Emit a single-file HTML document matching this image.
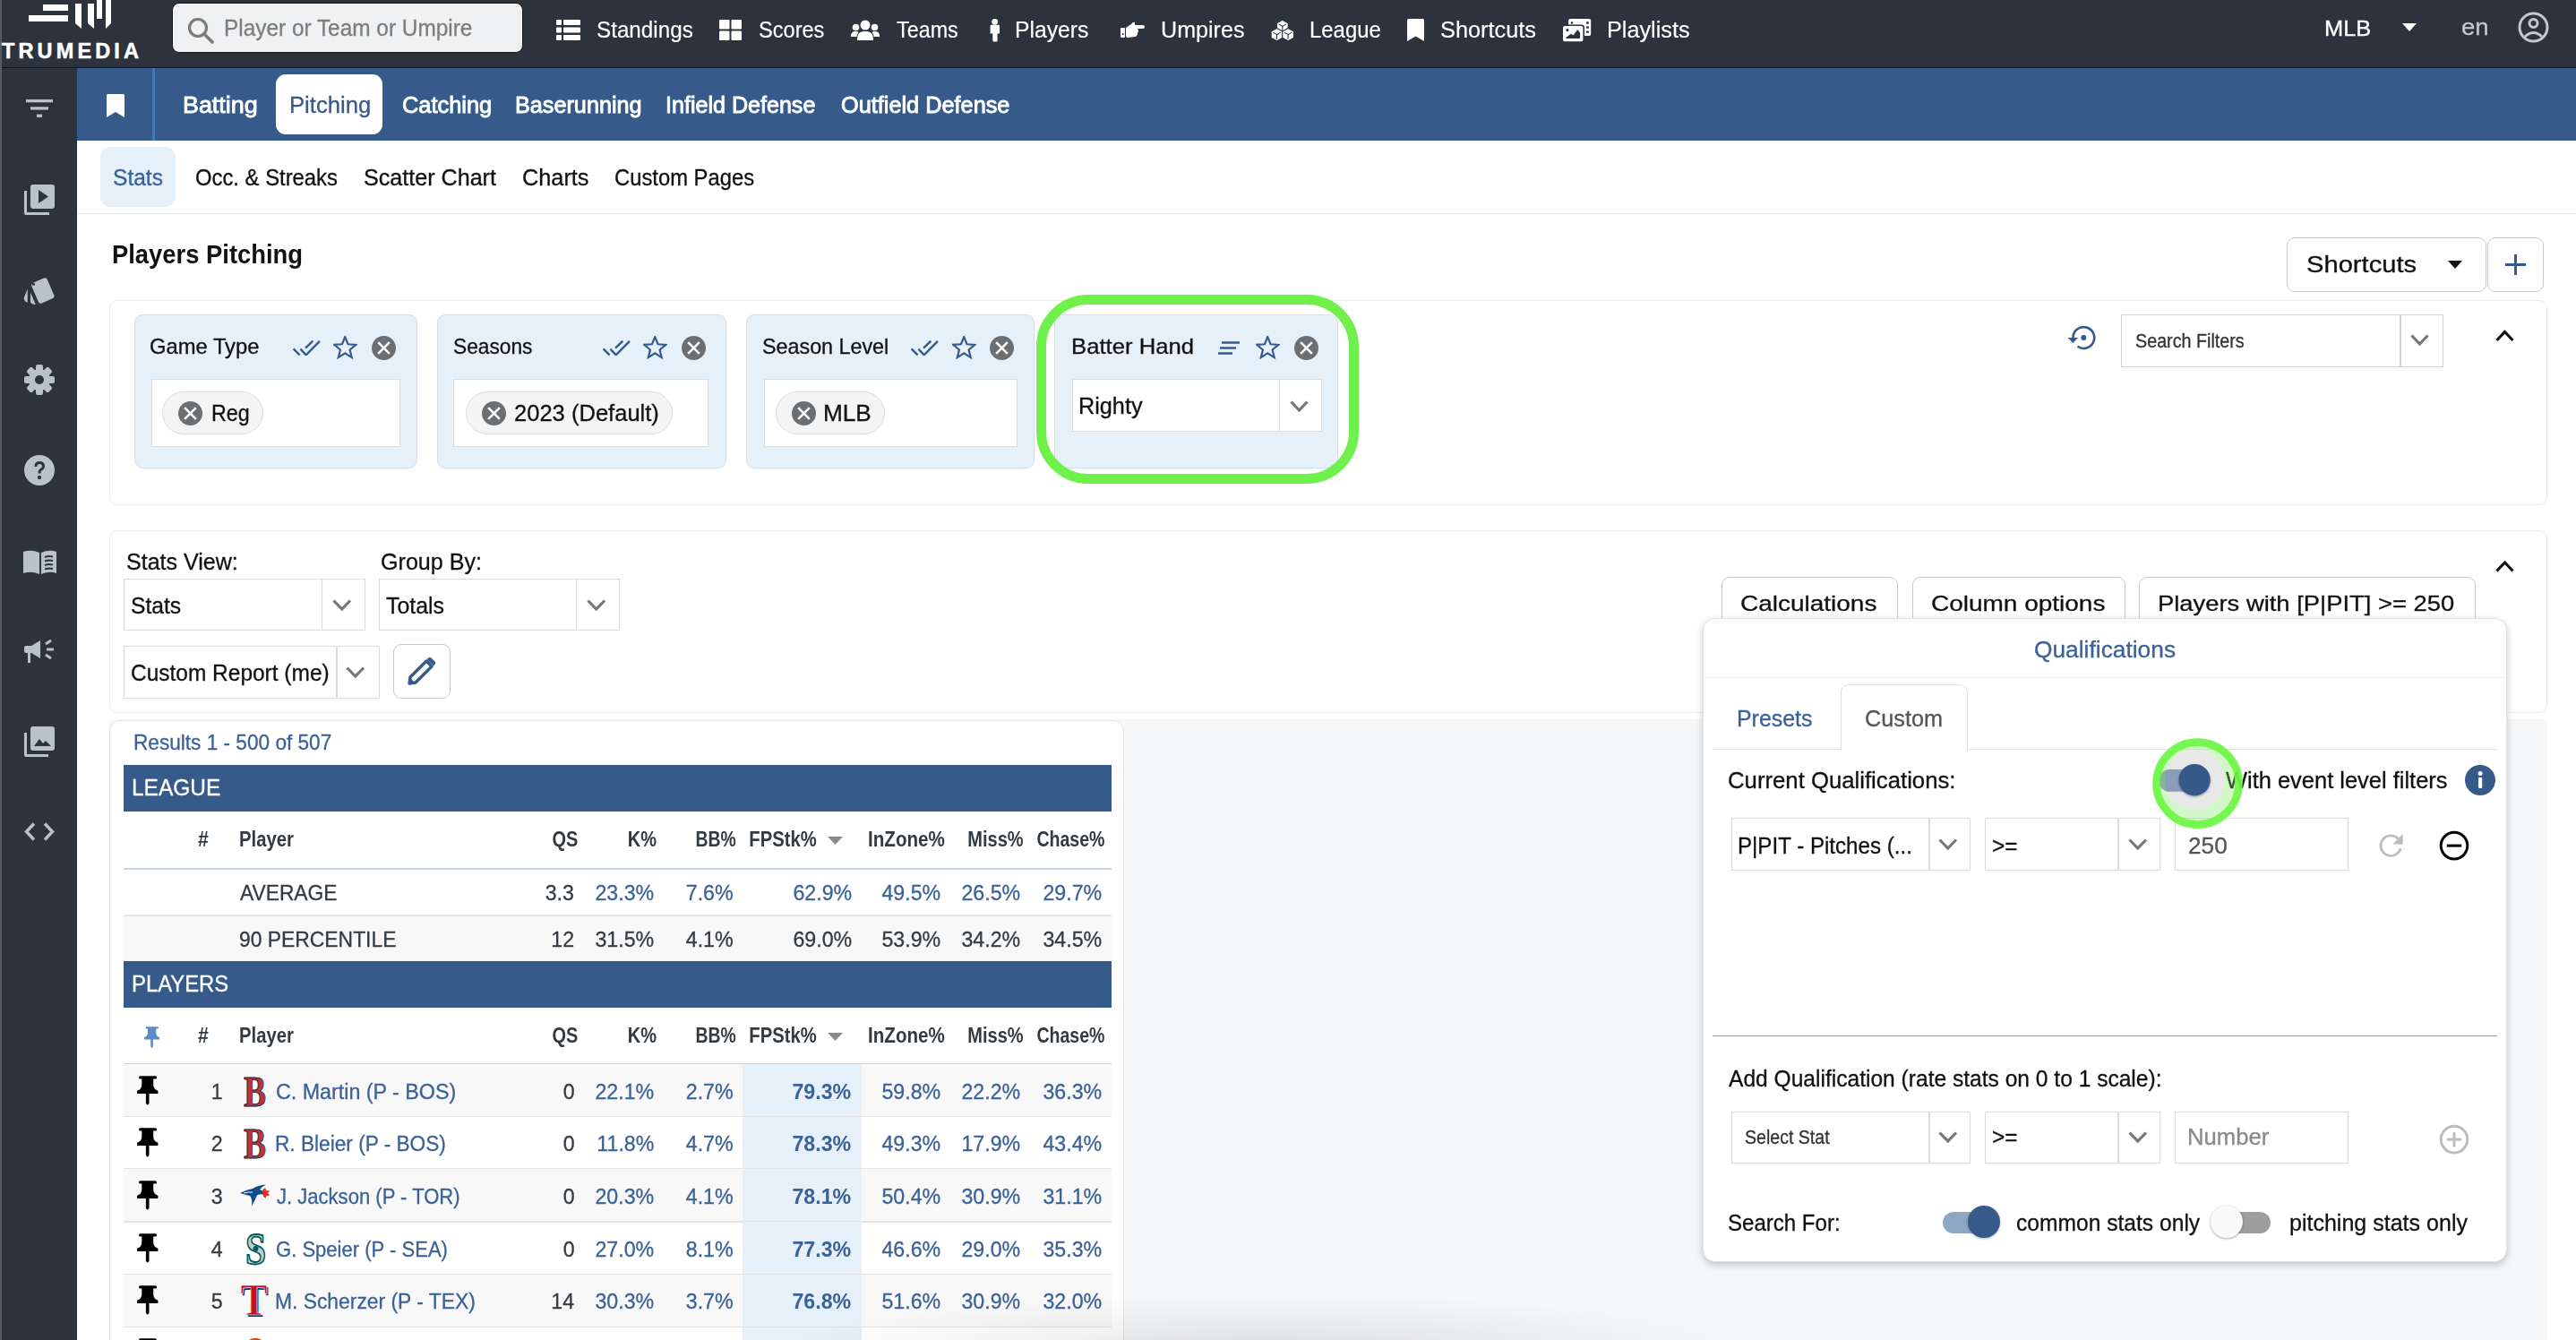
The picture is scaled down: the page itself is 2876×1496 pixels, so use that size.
<!DOCTYPE html>
<html><head><meta charset="utf-8"><title>TruMedia</title>
<style>
html,body{margin:0;padding:0;}
body{width:2876px;height:1496px;overflow:hidden;position:relative;background:#fff;font-family:'Liberation Sans', sans-serif;}
</style></head><body>
<div style="position:absolute;left:0px;top:0px;width:2876px;height:75px;background:#2d333d;"></div>
<div style="position:absolute;left:0px;top:75px;width:2876px;height:1px;background:#101215;"></div>
<div style="position:absolute;left:0px;top:76px;width:86px;height:1420px;background:#2d333d;"></div>
<div style="position:absolute;left:0px;top:0px;width:2px;height:1496px;background:#555b63;"></div>
<svg style="position:absolute;left:30px;top:0px;" width="96" height="34" viewBox="0 0 96 34">
<rect x="18" y="5" width="28" height="7" fill="#fff"/>
<rect x="2" y="17" width="44" height="7" fill="#fff"/>
<polygon points="54,4 61,4 61,32 54,26" fill="#fff"/>
<polygon points="68,4 75,4 75,32 68,26" fill="#fff"/>
<rect x="78" y="0" width="6" height="21" fill="#fff"/>
<polygon points="88,0 94,0 94,26 88,32" fill="#fff"/>
</svg>
<span style="position:absolute;white-space:nowrap;font-family:'Liberation Sans', sans-serif;font-size:23.5px;line-height:26.25px;color:#fff;font-weight:700;-webkit-text-stroke:0.5px #fff;letter-spacing:4.136px;left:2.0px;top:43.73px;transform-origin:0 0;">TRUMEDIA</span>
<div style="position:absolute;left:192px;top:3px;width:392px;height:56px;background:#f0f1f3;border:1px solid #15181c;border-radius:8px;box-sizing:border-box;"></div>
<svg style="position:absolute;left:209px;top:19px;" width="30" height="30" viewBox="0 0 30 30"><circle cx="12" cy="12" r="9.5" fill="none" stroke="#7a7a7a" stroke-width="3.2"/><line x1="19" y1="19" x2="28" y2="28" stroke="#7a7a7a" stroke-width="3.6" stroke-linecap="round"/></svg>
<span style="position:absolute;white-space:nowrap;font-family:'Liberation Sans', sans-serif;font-size:25px;line-height:27.925px;color:#7d7d7d;font-weight:400;-webkit-text-stroke:0.3px #7d7d7d;left:249.55px;top:17.98px;transform-origin:0 0;transform:scaleX(0.9755);">Player or Team or Umpire</span>
<span style="position:absolute;white-space:nowrap;font-family:'Liberation Sans', sans-serif;font-size:25px;line-height:27.925px;color:#fff;font-weight:400;-webkit-text-stroke:0.15px #fff;left:665.73px;top:20.38px;transform-origin:0 0;transform:scaleX(0.9691);">Standings</span>
<span style="position:absolute;white-space:nowrap;font-family:'Liberation Sans', sans-serif;font-size:25px;line-height:27.925px;color:#fff;font-weight:400;-webkit-text-stroke:0.15px #fff;left:847.06px;top:20.38px;transform-origin:0 0;transform:scaleX(0.9435);">Scores</span>
<span style="position:absolute;white-space:nowrap;font-family:'Liberation Sans', sans-serif;font-size:25px;line-height:27.925px;color:#fff;font-weight:400;-webkit-text-stroke:0.15px #fff;left:1000.7px;top:20.38px;transform-origin:0 0;transform:scaleX(0.9339);">Teams</span>
<span style="position:absolute;white-space:nowrap;font-family:'Liberation Sans', sans-serif;font-size:25px;line-height:27.925px;color:#fff;font-weight:400;-webkit-text-stroke:0.15px #fff;left:1133.02px;top:20.38px;transform-origin:0 0;transform:scaleX(0.9893);">Players</span>
<span style="position:absolute;white-space:nowrap;font-family:'Liberation Sans', sans-serif;font-size:25px;line-height:27.925px;color:#fff;font-weight:400;-webkit-text-stroke:0.15px #fff;left:1296.0px;top:20.38px;transform-origin:0 0;transform:scaleX(1.0047);">Umpires</span>
<span style="position:absolute;white-space:nowrap;font-family:'Liberation Sans', sans-serif;font-size:25px;line-height:27.925px;color:#fff;font-weight:400;-webkit-text-stroke:0.15px #fff;left:1462.09px;top:20.38px;transform-origin:0 0;transform:scaleX(0.9563);">League</span>
<span style="position:absolute;white-space:nowrap;font-family:'Liberation Sans', sans-serif;font-size:25px;line-height:27.925px;color:#fff;font-weight:400;-webkit-text-stroke:0.15px #fff;left:1608.49px;top:20.38px;transform-origin:0 0;transform:scaleX(1.0134);">Shortcuts</span>
<span style="position:absolute;white-space:nowrap;font-family:'Liberation Sans', sans-serif;font-size:25px;line-height:27.925px;color:#fff;font-weight:400;-webkit-text-stroke:0.15px #fff;left:1793.98px;top:20.38px;transform-origin:0 0;transform:scaleX(1.0091);">Playlists</span>
<svg style="position:absolute;left:621px;top:22px;" width="27" height="23" viewBox="0 0 27 23"><rect x="0" y="0" width="6" height="6" rx="1" fill="#fff"/><rect x="8" y="0" width="19" height="6" rx="1" fill="#fff"/>
<rect x="0" y="8.5" width="6" height="6" rx="1" fill="#fff"/><rect x="8" y="8.5" width="19" height="6" rx="1" fill="#fff"/>
<rect x="0" y="17" width="6" height="6" rx="1" fill="#fff"/><rect x="8" y="17" width="19" height="6" rx="1" fill="#fff"/></svg>
<svg style="position:absolute;left:803px;top:22px;" width="25" height="23" viewBox="0 0 25 23"><rect x="0" y="0" width="11.5" height="10.5" rx="1" fill="#fff"/><rect x="13.5" y="0" width="11.5" height="10.5" rx="1" fill="#fff"/>
<rect x="0" y="12.5" width="11.5" height="10.5" rx="1" fill="#fff"/><rect x="13.5" y="12.5" width="11.5" height="10.5" rx="1" fill="#fff"/></svg>
<svg style="position:absolute;left:950px;top:22px;" width="32" height="24" viewBox="0 0 32 24"><circle cx="16" cy="6" r="5.5" fill="#fff"/><path d="M7 23 C7 15 10 13 16 13 C22 13 25 15 25 23 Z" fill="#fff"/>
<circle cx="5.5" cy="8.5" r="3.8" fill="#fff"/><path d="M0 19 C0 14 2 13 6 13 C8 13 9 14 8 15 C7 16 6.5 18 6.5 19 Z" fill="#fff"/>
<circle cx="26.5" cy="8.5" r="3.8" fill="#fff"/><path d="M32 19 C32 14 30 13 26 13 C24 13 23 14 24 15 C25 16 25.5 18 25.5 19 Z" fill="#fff"/></svg>
<svg style="position:absolute;left:1104px;top:20px;" width="14" height="28" viewBox="0 0 14 28"><circle cx="6.7" cy="4.3" r="3.4" fill="#fff"/><path d="M3 7.8 H10.6 Q12 7.8 12 9.2 V17.5 H9.6 V25.3 Q9.6 26.4 8.5 26.4 H5.3 Q4.3 26.4 4.3 25.3 V17.5 H1.6 V9.2 Q1.6 7.8 3 7.8Z" fill="#fff"/></svg>
<svg style="position:absolute;left:1251px;top:24px;" width="27" height="19" viewBox="0 0 27 19"><rect x="0" y="7" width="5" height="11" rx="1" fill="#fff"/><path d="M6 7 L12 3 Q14 0 16 1 L16 4 L25 4 Q27 4 27 6 Q27 8 25 8 L19 8 Q20 9 20 10.5 Q20 12 19 12.5 Q19.5 14 18.5 15 Q18 17 16 17 L8 18 Q6 18 6 16 Z" fill="#fff"/><rect x="2" y="13" width="1.5" height="2" fill="#2d333d"/></svg>
<svg style="position:absolute;left:1418px;top:21px;" width="28" height="26" viewBox="0 0 28 26"><polygon points="13.8,1.2000000000000002 20.200000000000003,4.800000000000001 20.200000000000003,12.0 13.8,15.600000000000001 7.4,12.0 7.4,4.800000000000001" fill="#fff" stroke="#2d333d" stroke-width="1.1" stroke-linejoin="round"/><path d="M9.600000000000001 5.9 L13.8 8.4 L18.000000000000004 5.9 M13.8 8.4 V13.600000000000001" fill="none" stroke="#2d333d" stroke-width="1.1"/><polygon points="9.200000000000001,7.4 12.600000000000001,9.6 12.600000000000001,13.000000000000002 9.200000000000001,11.4" fill="#2d333d" opacity="0.0"/><polygon points="7.5,10.400000000000002 13.9,14.000000000000002 13.9,21.200000000000003 7.5,24.8 1.0999999999999996,21.200000000000003 1.0999999999999996,14.000000000000002" fill="#fff" stroke="#2d333d" stroke-width="1.1" stroke-linejoin="round"/><path d="M3.3 15.100000000000001 L7.5 17.6 L11.7 15.100000000000001 M7.5 17.6 V22.8" fill="none" stroke="#2d333d" stroke-width="1.1"/><polygon points="2.8999999999999995,16.6 6.3,18.8 6.3,22.2 2.8999999999999995,20.6" fill="#2d333d" opacity="0.0"/><polygon points="20.1,10.400000000000002 26.5,14.000000000000002 26.5,21.200000000000003 20.1,24.8 13.700000000000001,21.200000000000003 13.700000000000001,14.000000000000002" fill="#fff" stroke="#2d333d" stroke-width="1.1" stroke-linejoin="round"/><path d="M15.900000000000002 15.100000000000001 L20.1 17.6 L24.3 15.100000000000001 M20.1 17.6 V22.8" fill="none" stroke="#2d333d" stroke-width="1.1"/><polygon points="15.500000000000002,16.6 18.900000000000002,18.8 18.900000000000002,22.2 15.500000000000002,20.6" fill="#2d333d" opacity="0.0"/></svg>
<svg style="position:absolute;left:1571px;top:21px;" width="19" height="25" viewBox="0 0 19 25"><path d="M1.5 0 H17.5 Q19 0 19 1.5 V25 L9.5 19.5 L0 25 V1.5 Q0 0 1.5 0Z" fill="#fff"/></svg>
<svg style="position:absolute;left:1744px;top:20px;" width="34" height="28" viewBox="0 0 34 28"><rect x="7.1" y="1" width="25.1" height="19.1" rx="2" fill="#fff"/>
<rect x="27.1" y="4.3" width="2.8" height="2.3" fill="#2d333d"/><rect x="27.1" y="9.4" width="2.8" height="2.3" fill="#2d333d"/><rect x="27.1" y="14.5" width="2.8" height="2.3" fill="#2d333d"/><rect x="9.9" y="4.3" width="2.3" height="2.3" fill="#2d333d"/>
<rect x="0.2" y="8.2" width="24" height="18.8" rx="2.6" fill="#fff" stroke="#2d333d" stroke-width="1.6"/>
<path d="M4.3 22.9 V22 L9.9 17.8 L12.6 19.2 L17.3 13.1 L20.1 16.4 V22.9 Z" fill="#2d333d"/><circle cx="5.9" cy="13.6" r="1.6" fill="#2d333d"/></svg>
<span style="position:absolute;white-space:nowrap;font-family:'Liberation Sans', sans-serif;font-size:24.2px;line-height:27.031px;color:#fff;font-weight:400;-webkit-text-stroke:0.3px #fff;left:2595.45px;top:18.1px;transform-origin:0 0;transform:scaleX(1.0504);">MLB</span>
<svg style="position:absolute;left:2682px;top:26px;" width="16" height="9" viewBox="0 0 16 9"><polygon points="0,0 16,0 8,9" fill="#fff"/></svg>
<span style="position:absolute;white-space:nowrap;font-family:'Liberation Sans', sans-serif;font-size:25px;line-height:27.925px;color:#c3c8ce;font-weight:400;-webkit-text-stroke:0.3px #c3c8ce;left:2747.9px;top:17.38px;transform-origin:0 0;transform:scaleX(1.1002);">en</span>
<svg style="position:absolute;left:2811px;top:13px;" width="35" height="35" viewBox="0 0 35 35"><circle cx="17.5" cy="17.5" r="15.5" fill="none" stroke="#c3c8ce" stroke-width="3"/>
<circle cx="17.5" cy="13" r="4.5" fill="none" stroke="#c3c8ce" stroke-width="3"/>
<path d="M8 28 Q17.5 19 27 28" fill="none" stroke="#c3c8ce" stroke-width="3"/></svg>
<svg style="position:absolute;left:29px;top:111px;" width="31" height="21" viewBox="0 0 31 21"><rect x="0" y="0" width="30" height="3.3" fill="#b9c1c9"/><rect x="5" y="8.3" width="20" height="3.3" fill="#b9c1c9"/><rect x="12" y="16.6" width="6" height="3.3" fill="#b9c1c9"/></svg>
<svg style="position:absolute;left:27px;top:206px;" width="35" height="35" viewBox="0 0 35 35"><path d="M0 7 V32 Q0 34 2 34 H28 V31 H3 V7 Z" fill="#b9c1c9"/><rect x="7" y="0" width="27" height="27" rx="3" fill="#b9c1c9"/><polygon points="16,6 27,13.5 16,21" fill="#2d333d"/></svg>
<svg style="position:absolute;left:20px;top:300px;" width="50" height="50" viewBox="0 0 50 50"><path d="M10.8 22.8 L6.8 32 Q6 35.5 10.8 38 Z" fill="#b9c1c9"/><path d="M14 26.5 V37 Q14.5 39.6 19.8 40.1 Z" fill="#b9c1c9"/><rect x="18.3" y="12.15" width="19" height="24.7" rx="3" transform="rotate(-23.2 27.8 24.5)" fill="#b9c1c9"/><circle cx="17.4" cy="17.2" r="1.6" fill="#2d333d"/></svg>
<svg style="position:absolute;left:27px;top:407px;" width="34" height="34" viewBox="0 0 34 34"><g transform="translate(17 17)"><g fill="#b9c1c9">
<rect x="-4" y="-17" width="8" height="34" rx="2"/><rect x="-4" y="-17" width="8" height="34" rx="2" transform="rotate(45)"/>
<rect x="-4" y="-17" width="8" height="34" rx="2" transform="rotate(90)"/><rect x="-4" y="-17" width="8" height="34" rx="2" transform="rotate(135)"/>
<circle r="12"/></g><circle r="5" fill="#2d333d"/></g></svg>
<svg style="position:absolute;left:27px;top:508px;" width="34" height="34" viewBox="0 0 34 34"><circle cx="17" cy="17" r="17" fill="#b9c1c9"/><path d="M11.5 13 Q11.5 7 17 7 Q23 7 23 12.5 Q23 15.5 19.5 17.5 Q18.5 18.2 18.5 20.5 H15.5 Q15.5 16.5 18 15.2 Q20 14 20 12.5 Q20 10 17 10 Q14.5 10 14.5 13 Z" fill="#2d333d"/><circle cx="17" cy="25" r="2.2" fill="#2d333d"/></svg>
<svg style="position:absolute;left:26px;top:613px;" width="38" height="29" viewBox="0 0 38 29"><path d="M0 3 Q9 0 18 4 V28 Q9 24 0 27 Z" fill="#b9c1c9"/><path d="M20 4 Q29 0 37 3 V27 Q29 24 20 28 Z" fill="#b9c1c9"/><g stroke="#2d333d" stroke-width="2"><path d="M24 9 Q28 7.5 33 8.5"/><path d="M24 13.5 Q28 12 33 13"/><path d="M24 18 Q28 16.5 33 17.5"/><path d="M24 22.5 Q28 21 33 22"/></g></svg>
<svg style="position:absolute;left:27px;top:714px;" width="34" height="27" viewBox="0 0 34 27"><path d="M2 7 H8 L18 1 V21 L8 15 H7 V26 H4 V15 H2 Q0 15 0 13 V9 Q0 7 2 7Z" fill="#b9c1c9"/><g stroke="#b9c1c9" stroke-width="3"><path d="M24 5 L30 1"/><path d="M25 11 H33"/><path d="M24 17 L30 21"/></g></svg>
<svg style="position:absolute;left:27px;top:811px;" width="35" height="35" viewBox="0 0 35 35"><path d="M0 7 V32 Q0 34 2 34 H27 V31 H3 V7 Z" fill="#b9c1c9"/><rect x="7" y="0" width="27" height="27" rx="3" fill="#b9c1c9"/><path d="M11 22 L17 14 L21 19 L24 16 L30 22 Z" fill="#2d333d"/></svg>
<svg style="position:absolute;left:27px;top:918px;" width="34" height="21" viewBox="0 0 34 21"><path d="M11 1.5 L2.5 10.5 L11 19.5" fill="none" stroke="#b9c1c9" stroke-width="3.4"/><path d="M23 1.5 L31.5 10.5 L23 19.5" fill="none" stroke="#b9c1c9" stroke-width="3.4"/></svg>
<div style="position:absolute;left:86px;top:76px;width:2790px;height:81px;background:#365a8a;"></div>
<div style="position:absolute;left:170px;top:76px;width:3px;height:81px;background:#4677b8;"></div>
<svg style="position:absolute;left:119px;top:105px;" width="20" height="26" viewBox="0 0 20 26"><path d="M1.5 0 H18.5 Q20 0 20 1.5 V26 L10 20 L0 26 V1.5 Q0 0 1.5 0Z" fill="#fff"/></svg>
<div style="position:absolute;left:308px;top:83px;width:119px;height:67px;background:#fff;border-radius:11px;"></div>
<span style="position:absolute;white-space:nowrap;font-family:'Liberation Sans', sans-serif;font-size:26px;line-height:29.042px;color:#fff;font-weight:400;-webkit-text-stroke:0.9px #fff;left:204.43px;top:103.47px;transform-origin:0 0;transform:scaleX(1.0337);">Batting</span>
<span style="position:absolute;white-space:nowrap;font-family:'Liberation Sans', sans-serif;font-size:26px;line-height:29.042px;color:#365a8a;font-weight:400;-webkit-text-stroke:0.3px #365a8a;left:322.73px;top:103.47px;transform-origin:0 0;transform:scaleX(0.9861);">Pitching</span>
<span style="position:absolute;white-space:nowrap;font-family:'Liberation Sans', sans-serif;font-size:26px;line-height:29.042px;color:#fff;font-weight:400;-webkit-text-stroke:0.9px #fff;left:448.62px;top:103.47px;transform-origin:0 0;transform:scaleX(0.9765);">Catching</span>
<span style="position:absolute;white-space:nowrap;font-family:'Liberation Sans', sans-serif;font-size:26px;line-height:29.042px;color:#fff;font-weight:400;-webkit-text-stroke:0.9px #fff;left:574.86px;top:103.47px;transform-origin:0 0;transform:scaleX(0.9696);">Baserunning</span>
<span style="position:absolute;white-space:nowrap;font-family:'Liberation Sans', sans-serif;font-size:26px;line-height:29.042px;color:#fff;font-weight:400;-webkit-text-stroke:0.9px #fff;left:743.07px;top:103.47px;transform-origin:0 0;transform:scaleX(0.9650);">Infield Defense</span>
<span style="position:absolute;white-space:nowrap;font-family:'Liberation Sans', sans-serif;font-size:26px;line-height:29.042px;color:#fff;font-weight:400;-webkit-text-stroke:0.9px #fff;left:939.03px;top:103.47px;transform-origin:0 0;transform:scaleX(0.9729);">Outfield Defense</span>
<div style="position:absolute;left:112px;top:164px;width:84px;height:67px;background:#e6f0f9;border-radius:11px;"></div>
<span style="position:absolute;white-space:nowrap;font-family:'Liberation Sans', sans-serif;font-size:25px;line-height:27.925px;color:#3a6198;font-weight:400;-webkit-text-stroke:0.3px #3a6198;left:125.52px;top:185.38px;transform-origin:0 0;transform:scaleX(0.9825);">Stats</span>
<span style="position:absolute;white-space:nowrap;font-family:'Liberation Sans', sans-serif;font-size:25px;line-height:27.925px;color:#111;font-weight:400;-webkit-text-stroke:0.3px #111;left:217.55px;top:185.38px;transform-origin:0 0;transform:scaleX(0.9533);">Occ. &amp; Streaks</span>
<span style="position:absolute;white-space:nowrap;font-family:'Liberation Sans', sans-serif;font-size:25px;line-height:27.925px;color:#111;font-weight:400;-webkit-text-stroke:0.3px #111;left:405.5px;top:185.38px;transform-origin:0 0;transform:scaleX(1.0046);">Scatter Chart</span>
<span style="position:absolute;white-space:nowrap;font-family:'Liberation Sans', sans-serif;font-size:25px;line-height:27.925px;color:#111;font-weight:400;-webkit-text-stroke:0.3px #111;left:582.99px;top:185.38px;transform-origin:0 0;transform:scaleX(1.0120);">Charts</span>
<span style="position:absolute;white-space:nowrap;font-family:'Liberation Sans', sans-serif;font-size:25px;line-height:27.925px;color:#111;font-weight:400;-webkit-text-stroke:0.3px #111;left:686.05px;top:185.38px;transform-origin:0 0;transform:scaleX(0.9516);">Custom Pages</span>
<div style="position:absolute;left:86px;top:237.5px;width:2790px;height:1.5px;background:#e4e4e4;"></div>
<span style="position:absolute;white-space:nowrap;font-family:'Liberation Sans', sans-serif;font-size:30px;line-height:33.51px;color:#111;font-weight:700;left:125.17px;top:266.85px;transform-origin:0 0;transform:scaleX(0.9127);">Players Pitching</span>
<div style="position:absolute;left:2553px;top:265px;width:223px;height:61px;border:1.5px solid #c9c9c9;border-radius:9px;box-sizing:border-box;background:#fff;"></div>
<div style="position:absolute;left:2777px;top:265px;width:63px;height:61px;border:1.5px solid #c9c9c9;border-radius:9px;box-sizing:border-box;background:#fff;"></div>
<span style="position:absolute;white-space:nowrap;font-family:'Liberation Sans', sans-serif;font-size:26px;line-height:29.042px;color:#111;font-weight:400;-webkit-text-stroke:0.3px #111;left:2574.88px;top:280.87px;transform-origin:0 0;transform:scaleX(1.1210);">Shortcuts</span>
<svg style="position:absolute;left:2733px;top:291px;" width="16" height="9" viewBox="0 0 16 9"><polygon points="0,0 16,0 8,9" fill="#111"/></svg>
<svg style="position:absolute;left:2797px;top:284px;" width="23" height="23" viewBox="0 0 23 23"><rect x="10" y="0" width="3" height="23" fill="#365a8a"/><rect x="0" y="10" width="23" height="3" fill="#365a8a"/></svg>
<div style="position:absolute;left:122px;top:335px;width:2722px;height:229px;border:1.5px solid #ebebeb;border-radius:9px;box-sizing:border-box;"></div>
<div style="position:absolute;left:149.5px;top:350.5px;width:316.0px;height:172px;background:#e6f0f9;border:1.5px solid #d5dfea;border-radius:9px;box-sizing:border-box;"></div>
<span style="position:absolute;white-space:nowrap;font-family:'Liberation Sans', sans-serif;font-size:24px;line-height:26.808px;color:#111;font-weight:400;-webkit-text-stroke:0.3px #111;left:167.01px;top:374.28px;transform-origin:0 0;transform:scaleX(0.9902);">Game Type</span>
<svg style="position:absolute;left:327px;top:379.5px;" width="31" height="17" viewBox="0 0 31 17"><path d="M0.6 9.4 L7.6 16.4 M8.4 9.7 L14.7 16.3 L29.9 0.9 M14 8.7 L22.3 0.6" fill="none" stroke="#365a8a" stroke-width="2.4"/></svg>
<svg style="position:absolute;left:372.0px;top:374.8px;" width="27" height="26" viewBox="0 0 27 26"><polygon points="13.25,1.10 16.54,9.27 25.33,9.88 18.58,15.53 20.71,24.07 13.25,19.40 5.79,24.07 7.92,15.53 1.17,9.88 9.96,9.27" fill="none" stroke="#365a8a" stroke-width="2.2" stroke-linejoin="miter" stroke-miterlimit="10"/></svg>
<svg style="position:absolute;left:415px;top:374.5px;" width="27" height="27" viewBox="0 0 27 27"><circle cx="13.5" cy="13.5" r="13.5" fill="#6b6f72"/><path d="M7.155 7.155 L19.845 19.845 M19.845 7.155 L7.155 19.845" stroke="#fff" stroke-width="2.565"/></svg>
<div style="position:absolute;left:168.5px;top:423px;width:278.0px;height:75.5px;background:#fff;border:1.5px solid #dcdcdc;box-sizing:border-box;"></div>
<div style="position:absolute;left:181px;top:437px;width:113px;height:47.5px;background:#f4f4f4;border:1.5px solid #dcdcdc;border-radius:24px;box-sizing:border-box;"></div>
<svg style="position:absolute;left:199px;top:447.5px;" width="27" height="27" viewBox="0 0 27 27"><circle cx="13.5" cy="13.5" r="13.5" fill="#6b6f72"/><path d="M7.155 7.155 L19.845 19.845 M19.845 7.155 L7.155 19.845" stroke="#fff" stroke-width="2.565"/></svg>
<span style="position:absolute;white-space:nowrap;font-family:'Liberation Sans', sans-serif;font-size:25px;line-height:27.925px;color:#111;font-weight:400;-webkit-text-stroke:0.3px #111;left:235.64px;top:448.12px;transform-origin:0 0;transform:scaleX(0.9311);">Reg</span>
<div style="position:absolute;left:487.5px;top:350.5px;width:323.0px;height:172px;background:#e6f0f9;border:1.5px solid #d5dfea;border-radius:9px;box-sizing:border-box;"></div>
<span style="position:absolute;white-space:nowrap;font-family:'Liberation Sans', sans-serif;font-size:24px;line-height:26.808px;color:#111;font-weight:400;-webkit-text-stroke:0.3px #111;left:506.05px;top:374.28px;transform-origin:0 0;transform:scaleX(0.9470);">Seasons</span>
<svg style="position:absolute;left:673px;top:379.5px;" width="31" height="17" viewBox="0 0 31 17"><path d="M0.6 9.4 L7.6 16.4 M8.4 9.7 L14.7 16.3 L29.9 0.9 M14 8.7 L22.3 0.6" fill="none" stroke="#365a8a" stroke-width="2.4"/></svg>
<svg style="position:absolute;left:717.5px;top:374.8px;" width="27" height="26" viewBox="0 0 27 26"><polygon points="13.25,1.10 16.54,9.27 25.33,9.88 18.58,15.53 20.71,24.07 13.25,19.40 5.79,24.07 7.92,15.53 1.17,9.88 9.96,9.27" fill="none" stroke="#365a8a" stroke-width="2.2" stroke-linejoin="miter" stroke-miterlimit="10"/></svg>
<svg style="position:absolute;left:761px;top:374.5px;" width="27" height="27" viewBox="0 0 27 27"><circle cx="13.5" cy="13.5" r="13.5" fill="#6b6f72"/><path d="M7.155 7.155 L19.845 19.845 M19.845 7.155 L7.155 19.845" stroke="#fff" stroke-width="2.565"/></svg>
<div style="position:absolute;left:506px;top:423px;width:285px;height:75.5px;background:#fff;border:1.5px solid #dcdcdc;box-sizing:border-box;"></div>
<div style="position:absolute;left:520px;top:437px;width:231px;height:47.5px;background:#f4f4f4;border:1.5px solid #dcdcdc;border-radius:24px;box-sizing:border-box;"></div>
<svg style="position:absolute;left:538px;top:447.5px;" width="27" height="27" viewBox="0 0 27 27"><circle cx="13.5" cy="13.5" r="13.5" fill="#6b6f72"/><path d="M7.155 7.155 L19.845 19.845 M19.845 7.155 L7.155 19.845" stroke="#fff" stroke-width="2.565"/></svg>
<span style="position:absolute;white-space:nowrap;font-family:'Liberation Sans', sans-serif;font-size:25px;line-height:27.925px;color:#111;font-weight:400;-webkit-text-stroke:0.3px #111;left:574.48px;top:448.12px;transform-origin:0 0;transform:scaleX(1.0218);">2023 (Default)</span>
<div style="position:absolute;left:833.4px;top:350.5px;width:322.0000000000001px;height:172px;background:#e6f0f9;border:1.5px solid #d5dfea;border-radius:9px;box-sizing:border-box;"></div>
<span style="position:absolute;white-space:nowrap;font-family:'Liberation Sans', sans-serif;font-size:24px;line-height:26.808px;color:#111;font-weight:400;-webkit-text-stroke:0.3px #111;left:851.03px;top:374.28px;transform-origin:0 0;transform:scaleX(0.9713);">Season Level</span>
<svg style="position:absolute;left:1017px;top:379.5px;" width="31" height="17" viewBox="0 0 31 17"><path d="M0.6 9.4 L7.6 16.4 M8.4 9.7 L14.7 16.3 L29.9 0.9 M14 8.7 L22.3 0.6" fill="none" stroke="#365a8a" stroke-width="2.4"/></svg>
<svg style="position:absolute;left:1062.5px;top:374.8px;" width="27" height="26" viewBox="0 0 27 26"><polygon points="13.25,1.10 16.54,9.27 25.33,9.88 18.58,15.53 20.71,24.07 13.25,19.40 5.79,24.07 7.92,15.53 1.17,9.88 9.96,9.27" fill="none" stroke="#365a8a" stroke-width="2.2" stroke-linejoin="miter" stroke-miterlimit="10"/></svg>
<svg style="position:absolute;left:1105px;top:374.5px;" width="27" height="27" viewBox="0 0 27 27"><circle cx="13.5" cy="13.5" r="13.5" fill="#6b6f72"/><path d="M7.155 7.155 L19.845 19.845 M19.845 7.155 L7.155 19.845" stroke="#fff" stroke-width="2.565"/></svg>
<div style="position:absolute;left:852.7px;top:423px;width:283.70000000000005px;height:75.5px;background:#fff;border:1.5px solid #dcdcdc;box-sizing:border-box;"></div>
<div style="position:absolute;left:866px;top:437px;width:121.70000000000005px;height:47.5px;background:#f4f4f4;border:1.5px solid #dcdcdc;border-radius:24px;box-sizing:border-box;"></div>
<svg style="position:absolute;left:883.7px;top:447.5px;" width="27" height="27" viewBox="0 0 27 27"><circle cx="13.5" cy="13.5" r="13.5" fill="#6b6f72"/><path d="M7.155 7.155 L19.845 19.845 M19.845 7.155 L7.155 19.845" stroke="#fff" stroke-width="2.565"/></svg>
<span style="position:absolute;white-space:nowrap;font-family:'Liberation Sans', sans-serif;font-size:25px;line-height:27.925px;color:#111;font-weight:400;-webkit-text-stroke:0.3px #111;left:918.91px;top:448.12px;transform-origin:0 0;transform:scaleX(1.0466);">MLB</span>
<div style="position:absolute;left:1177px;top:350.5px;width:317.4000000000001px;height:172px;background:#e6f0f9;border:1.5px solid #d5dfea;border-radius:9px;box-sizing:border-box;"></div>
<span style="position:absolute;white-space:nowrap;font-family:'Liberation Sans', sans-serif;font-size:24px;line-height:26.808px;color:#111;font-weight:400;-webkit-text-stroke:0.3px #111;left:1195.93px;top:374.28px;transform-origin:0 0;transform:scaleX(1.0698);">Batter Hand</span>
<svg style="position:absolute;left:1402.2px;top:374.8px;" width="27" height="26" viewBox="0 0 27 26"><polygon points="13.25,1.10 16.54,9.27 25.33,9.88 18.58,15.53 20.71,24.07 13.25,19.40 5.79,24.07 7.92,15.53 1.17,9.88 9.96,9.27" fill="none" stroke="#365a8a" stroke-width="2.2" stroke-linejoin="miter" stroke-miterlimit="10"/></svg>
<svg style="position:absolute;left:1444.6px;top:374.5px;" width="27" height="27" viewBox="0 0 27 27"><circle cx="13.5" cy="13.5" r="13.5" fill="#6b6f72"/><path d="M7.155 7.155 L19.845 19.845 M19.845 7.155 L7.155 19.845" stroke="#fff" stroke-width="2.565"/></svg>
<svg style="position:absolute;left:1359px;top:381px;" width="26" height="15" viewBox="0 0 26 15"><path d="M5 1.5 H25 M3 7.5 H21 M1 13.5 H17" stroke="#365a8a" stroke-width="2.6"/></svg>
<div style="position:absolute;left:1196.5px;top:423.4px;width:279px;height:58.6px;background:#fff;border:1.5px solid #dcdcdc;box-sizing:border-box;"></div>
<div style="position:absolute;left:1427.5px;top:423.4px;width:1.5px;height:58.6px;background:#dcdcdc;"></div>
<span style="position:absolute;white-space:nowrap;font-family:'Liberation Sans', sans-serif;font-size:25px;line-height:27.925px;color:#111;font-weight:400;-webkit-text-stroke:0.3px #111;left:1203.68px;top:439.88px;transform-origin:0 0;transform:scaleX(1.0092);">Righty</span>
<svg style="position:absolute;left:1439.5px;top:447px;" width="21" height="13" viewBox="0 0 21 13"><path d="M1.5 1.5 L10.5 11 L19.5 1.5" fill="none" stroke="#777" stroke-width="3.2"/></svg>
<div style="position:absolute;left:1156.8px;top:329px;width:360px;height:211px;border:11px solid #6ff04a;border-radius:58px;box-sizing:border-box;"></div>
<svg style="position:absolute;left:2309px;top:363px;" width="32" height="29" viewBox="0 0 32 29"><path d="M5.4 14 A11.9 11.9 0 1 1 10.47 23.75" fill="none" stroke="#365a8a" stroke-width="2.6"/><polygon points="-0.1,14.1 11.1,14.1 5.4,19.9" fill="#365a8a"/><circle cx="17.3" cy="14" r="3" fill="#365a8a"/></svg>
<div style="position:absolute;left:2368px;top:350.5px;width:360px;height:59px;background:#fff;border:1.5px solid #d6d6d6;box-sizing:border-box;"></div>
<div style="position:absolute;left:2679px;top:350.5px;width:1.5px;height:59px;background:#d6d6d6;"></div>
<span style="position:absolute;white-space:nowrap;font-family:'Liberation Sans', sans-serif;font-size:21.5px;line-height:24.015px;color:#333;font-weight:400;-webkit-text-stroke:0.3px #333;left:2384.0px;top:368.54px;transform-origin:0 0;transform:scaleX(0.9176);">Search Filters</span>
<svg style="position:absolute;left:2691px;top:373px;" width="21" height="13" viewBox="0 0 21 13"><path d="M1.5 1.5 L10.5 11 L19.5 1.5" fill="none" stroke="#777" stroke-width="3.2"/></svg>
<svg style="position:absolute;left:2786px;top:368px;" width="21" height="14" viewBox="0 0 21 14"><path d="M1.5 12 L10.5 2.5 L19.5 12" fill="none" stroke="#111" stroke-width="3.2"/></svg>
<div style="position:absolute;left:122px;top:592px;width:2722px;height:204px;border:1.5px solid #ebebeb;border-radius:9px;box-sizing:border-box;"></div>
<span style="position:absolute;white-space:nowrap;font-family:'Liberation Sans', sans-serif;font-size:25.5px;line-height:28.483px;color:#111;font-weight:400;-webkit-text-stroke:0.3px #111;left:141.02px;top:612.92px;transform-origin:0 0;transform:scaleX(0.9818);">Stats View:</span>
<span style="position:absolute;white-space:nowrap;font-family:'Liberation Sans', sans-serif;font-size:25.5px;line-height:28.483px;color:#111;font-weight:400;-webkit-text-stroke:0.3px #111;left:425.02px;top:612.92px;transform-origin:0 0;transform:scaleX(0.9846);">Group By:</span>
<div style="position:absolute;left:138px;top:645.5px;width:269.5px;height:58.5px;background:#fff;border:1.5px solid #dcdcdc;box-sizing:border-box;"></div>
<div style="position:absolute;left:358.5px;top:645.5px;width:1.5px;height:58.5px;background:#dcdcdc;"></div>
<span style="position:absolute;white-space:nowrap;font-family:'Liberation Sans', sans-serif;font-size:25.5px;line-height:28.483px;color:#111;font-weight:400;-webkit-text-stroke:0.3px #111;left:145.78px;top:661.92px;transform-origin:0 0;transform:scaleX(0.9670);">Stats</span>
<svg style="position:absolute;left:371px;top:669px;" width="21.5" height="13" viewBox="0 0 21.5 13"><path d="M1.5 1.5 L10.75 11 L20.0 1.5" fill="none" stroke="#777" stroke-width="3.2"/></svg>
<div style="position:absolute;left:422.5px;top:645.5px;width:269.25px;height:58.5px;background:#fff;border:1.5px solid #dcdcdc;box-sizing:border-box;"></div>
<div style="position:absolute;left:642.5px;top:645.5px;width:1.5px;height:58.5px;background:#dcdcdc;"></div>
<span style="position:absolute;white-space:nowrap;font-family:'Liberation Sans', sans-serif;font-size:25.5px;line-height:28.483px;color:#111;font-weight:400;-webkit-text-stroke:0.3px #111;left:430.75px;top:661.92px;transform-origin:0 0;transform:scaleX(0.9755);">Totals</span>
<svg style="position:absolute;left:655px;top:669px;" width="21.5" height="13" viewBox="0 0 21.5 13"><path d="M1.5 1.5 L10.75 11 L20.0 1.5" fill="none" stroke="#777" stroke-width="3.2"/></svg>
<div style="position:absolute;left:138px;top:721px;width:285.75px;height:58.5px;background:#fff;border:1.5px solid #dcdcdc;box-sizing:border-box;"></div>
<div style="position:absolute;left:375px;top:721px;width:1.5px;height:58.5px;background:#dcdcdc;"></div>
<span style="position:absolute;white-space:nowrap;font-family:'Liberation Sans', sans-serif;font-size:25.5px;line-height:28.483px;color:#111;font-weight:400;-webkit-text-stroke:0.3px #111;left:145.79px;top:736.92px;transform-origin:0 0;transform:scaleX(0.9596);">Custom Report (me)</span>
<svg style="position:absolute;left:386px;top:744px;" width="21.5" height="13" viewBox="0 0 21.5 13"><path d="M1.5 1.5 L10.75 11 L20.0 1.5" fill="none" stroke="#777" stroke-width="3.2"/></svg>
<div style="position:absolute;left:438.75px;top:719px;width:63.75px;height:60.5px;background:#fff;border:1.5px solid #c9c9c9;border-radius:9px;box-sizing:border-box;"></div>
<svg style="position:absolute;left:455px;top:734px;" width="31" height="31" viewBox="0 0 31 31"><path d="M2 29 L3 22 L21 4 L27 10 L9 28 Z" fill="none" stroke="#365a8a" stroke-width="3.4" stroke-linejoin="round"/><path d="M23 2 L25 0.5 L30.5 6 L29 8 Z" fill="#365a8a" stroke="#365a8a" stroke-width="2"/><path d="M2 29 L3.5 23.5 L7.5 27.5Z" fill="#365a8a"/></svg>
<div style="position:absolute;left:1921.75px;top:644px;width:197.0px;height:70px;background:#fff;border:1.5px solid #c9c9c9;border-radius:9px;box-sizing:border-box;"></div>
<span style="position:absolute;white-space:nowrap;font-family:'Liberation Sans', sans-serif;font-size:24.5px;line-height:27.366px;color:#111;font-weight:400;-webkit-text-stroke:0.3px #111;left:1942.86px;top:660.33px;transform-origin:0 0;transform:scaleX(1.1421);">Calculations</span>
<div style="position:absolute;left:2134.5px;top:644px;width:238.75px;height:70px;background:#fff;border:1.5px solid #c9c9c9;border-radius:9px;box-sizing:border-box;"></div>
<span style="position:absolute;white-space:nowrap;font-family:'Liberation Sans', sans-serif;font-size:24.5px;line-height:27.366px;color:#111;font-weight:400;-webkit-text-stroke:0.3px #111;left:2155.86px;top:660.33px;transform-origin:0 0;transform:scaleX(1.1421);">Column options</span>
<div style="position:absolute;left:2388.25px;top:644px;width:375.3499999999999px;height:70px;background:#fff;border:1.5px solid #c9c9c9;border-radius:9px;box-sizing:border-box;"></div>
<span style="position:absolute;white-space:nowrap;font-family:'Liberation Sans', sans-serif;font-size:24.5px;line-height:27.366px;color:#111;font-weight:400;-webkit-text-stroke:0.3px #111;left:2408.77px;top:660.33px;transform-origin:0 0;transform:scaleX(1.1175);">Players with [P|PIT] &gt;= 250</span>
<svg style="position:absolute;left:2786px;top:626px;" width="21" height="13" viewBox="0 0 21 13"><path d="M1.5 11.5 L10.5 2 L19.5 11.5" fill="none" stroke="#111" stroke-width="3.2"/></svg>
<div style="position:absolute;left:122px;top:803px;width:2722px;height:693px;background:#f6f7f9;"></div>
<div style="position:absolute;left:122px;top:803.5px;width:1133px;height:760px;background:#fff;border:1.5px solid #e6e6e6;border-radius:12px;box-sizing:border-box;"></div>
<div style="position:absolute;left:138px;top:854px;width:1103px;height:52px;background:#365a8a;"></div>
<span style="position:absolute;white-space:nowrap;font-family:'Liberation Sans', sans-serif;font-size:25px;line-height:27.925px;color:#fff;font-weight:400;-webkit-text-stroke:0.3px #fff;left:147.04px;top:866.17px;transform-origin:0 0;transform:scaleX(0.9797);">LEAGUE</span>
<span style="position:absolute;white-space:nowrap;font-family:'Liberation Sans', sans-serif;font-size:23px;line-height:25.691px;color:#333a40;font-weight:700;left:221.0px;top:925.43px;transform-origin:0 0;transform:scaleX(0.9231);">#</span>
<span style="position:absolute;white-space:nowrap;font-family:'Liberation Sans', sans-serif;font-size:23px;line-height:25.691px;color:#333a40;font-weight:700;left:266.62px;top:925.43px;transform-origin:0 0;transform:scaleX(0.8810);">Player</span>
<span style="position:absolute;white-space:nowrap;font-family:'Liberation Sans', sans-serif;font-size:23px;line-height:25.691px;color:#333a40;font-weight:700;right:2231.2px;top:925.43px;transform-origin:100% 0;transform:scaleX(0.8665);">QS</span>
<span style="position:absolute;white-space:nowrap;font-family:'Liberation Sans', sans-serif;font-size:23px;line-height:25.691px;color:#333a40;font-weight:700;right:2142.86px;top:925.43px;transform-origin:100% 0;transform:scaleX(0.8705);">K%</span>
<span style="position:absolute;white-space:nowrap;font-family:'Liberation Sans', sans-serif;font-size:23px;line-height:25.691px;color:#333a40;font-weight:700;right:2054.32px;top:925.43px;transform-origin:100% 0;transform:scaleX(0.8426);">BB%</span>
<span style="position:absolute;white-space:nowrap;font-family:'Liberation Sans', sans-serif;font-size:23px;line-height:25.691px;color:#333a40;font-weight:700;right:1964.6px;top:925.43px;transform-origin:100% 0;transform:scaleX(0.8791);">FPStk%</span>
<span style="position:absolute;white-space:nowrap;font-family:'Liberation Sans', sans-serif;font-size:23px;line-height:25.691px;color:#333a40;font-weight:700;right:1821.4px;top:925.43px;transform-origin:100% 0;transform:scaleX(0.8953);">InZone%</span>
<span style="position:absolute;white-space:nowrap;font-family:'Liberation Sans', sans-serif;font-size:23px;line-height:25.691px;color:#333a40;font-weight:700;right:1733.11px;top:925.43px;transform-origin:100% 0;transform:scaleX(0.8698);">Miss%</span>
<span style="position:absolute;white-space:nowrap;font-family:'Liberation Sans', sans-serif;font-size:23px;line-height:25.691px;color:#333a40;font-weight:700;right:1642.22px;top:925.43px;transform-origin:100% 0;transform:scaleX(0.8502);">Chase%</span>
<svg style="position:absolute;left:924px;top:934.25px;" width="17" height="9" viewBox="0 0 17 9"><polygon points="0,0 17,0 8.5,9" fill="#8a8a8a"/></svg>
<div style="position:absolute;left:138px;top:968.5px;width:1103px;height:2px;background:#c8d5e4;"></div>
<div style="position:absolute;left:138px;top:1021px;width:1103px;height:1.5px;background:#e3e3e3;"></div>
<div style="position:absolute;left:138px;top:1022.5px;width:1103px;height:50.5px;background:#f8f8f8;"></div>
<span style="position:absolute;white-space:nowrap;font-family:'Liberation Sans', sans-serif;font-size:24.4px;line-height:27.255px;color:#333a40;font-weight:400;-webkit-text-stroke:0.3px #333a40;left:267.5px;top:982.92px;transform-origin:0 0;transform:scaleX(0.9344);">AVERAGE</span>
<span style="position:absolute;white-space:nowrap;font-family:'Liberation Sans', sans-serif;font-size:24.4px;line-height:27.255px;color:#333a40;font-weight:400;-webkit-text-stroke:0.3px #333a40;left:266.56px;top:1034.67px;transform-origin:0 0;transform:scaleX(0.9379);">90 PERCENTILE</span>
<span style="position:absolute;white-space:nowrap;font-family:'Liberation Sans', sans-serif;font-size:24.4px;line-height:27.255px;color:#333a40;font-weight:400;-webkit-text-stroke:0.3px #333a40;right:2234.86px;top:982.92px;transform-origin:100% 0;transform:scaleX(0.9500);">3.3</span>
<span style="position:absolute;white-space:nowrap;font-family:'Liberation Sans', sans-serif;font-size:24.4px;line-height:27.255px;color:#333a40;font-weight:400;-webkit-text-stroke:0.3px #333a40;right:2234.86px;top:1034.67px;transform-origin:100% 0;transform:scaleX(0.9500);">12</span>
<span style="position:absolute;white-space:nowrap;font-family:'Liberation Sans', sans-serif;font-size:24.4px;line-height:27.255px;color:#3a6198;font-weight:400;-webkit-text-stroke:0.3px #3a6198;right:2146.15px;top:982.92px;transform-origin:100% 0;transform:scaleX(0.9500);">23.3%</span>
<span style="position:absolute;white-space:nowrap;font-family:'Liberation Sans', sans-serif;font-size:24.4px;line-height:27.255px;color:#333a40;font-weight:400;-webkit-text-stroke:0.3px #333a40;right:2146.15px;top:1034.67px;transform-origin:100% 0;transform:scaleX(0.9500);">31.5%</span>
<span style="position:absolute;white-space:nowrap;font-family:'Liberation Sans', sans-serif;font-size:24.4px;line-height:27.255px;color:#3a6198;font-weight:400;-webkit-text-stroke:0.3px #3a6198;right:2057.85px;top:982.92px;transform-origin:100% 0;transform:scaleX(0.9500);">7.6%</span>
<span style="position:absolute;white-space:nowrap;font-family:'Liberation Sans', sans-serif;font-size:24.4px;line-height:27.255px;color:#333a40;font-weight:400;-webkit-text-stroke:0.3px #333a40;right:2057.85px;top:1034.67px;transform-origin:100% 0;transform:scaleX(0.9500);">4.1%</span>
<span style="position:absolute;white-space:nowrap;font-family:'Liberation Sans', sans-serif;font-size:24.4px;line-height:27.255px;color:#3a6198;font-weight:400;-webkit-text-stroke:0.3px #3a6198;right:1925.15px;top:982.92px;transform-origin:100% 0;transform:scaleX(0.9500);">62.9%</span>
<span style="position:absolute;white-space:nowrap;font-family:'Liberation Sans', sans-serif;font-size:24.4px;line-height:27.255px;color:#333a40;font-weight:400;-webkit-text-stroke:0.3px #333a40;right:1925.15px;top:1034.67px;transform-origin:100% 0;transform:scaleX(0.9500);">69.0%</span>
<span style="position:absolute;white-space:nowrap;font-family:'Liberation Sans', sans-serif;font-size:24.4px;line-height:27.255px;color:#3a6198;font-weight:400;-webkit-text-stroke:0.3px #3a6198;right:1825.65px;top:982.92px;transform-origin:100% 0;transform:scaleX(0.9500);">49.5%</span>
<span style="position:absolute;white-space:nowrap;font-family:'Liberation Sans', sans-serif;font-size:24.4px;line-height:27.255px;color:#333a40;font-weight:400;-webkit-text-stroke:0.3px #333a40;right:1825.65px;top:1034.67px;transform-origin:100% 0;transform:scaleX(0.9500);">53.9%</span>
<span style="position:absolute;white-space:nowrap;font-family:'Liberation Sans', sans-serif;font-size:24.4px;line-height:27.255px;color:#3a6198;font-weight:400;-webkit-text-stroke:0.3px #3a6198;right:1736.65px;top:982.92px;transform-origin:100% 0;transform:scaleX(0.9500);">26.5%</span>
<span style="position:absolute;white-space:nowrap;font-family:'Liberation Sans', sans-serif;font-size:24.4px;line-height:27.255px;color:#333a40;font-weight:400;-webkit-text-stroke:0.3px #333a40;right:1736.65px;top:1034.67px;transform-origin:100% 0;transform:scaleX(0.9500);">34.2%</span>
<span style="position:absolute;white-space:nowrap;font-family:'Liberation Sans', sans-serif;font-size:24.4px;line-height:27.255px;color:#3a6198;font-weight:400;-webkit-text-stroke:0.3px #3a6198;right:1645.85px;top:982.92px;transform-origin:100% 0;transform:scaleX(0.9500);">29.7%</span>
<span style="position:absolute;white-space:nowrap;font-family:'Liberation Sans', sans-serif;font-size:24.4px;line-height:27.255px;color:#333a40;font-weight:400;-webkit-text-stroke:0.3px #333a40;right:1645.85px;top:1034.67px;transform-origin:100% 0;transform:scaleX(0.9500);">34.5%</span>
<div style="position:absolute;left:138px;top:1073px;width:1103px;height:52px;background:#365a8a;"></div>
<span style="position:absolute;white-space:nowrap;font-family:'Liberation Sans', sans-serif;font-size:25px;line-height:27.925px;color:#fff;font-weight:400;-webkit-text-stroke:0.3px #fff;left:147.09px;top:1085.28px;transform-origin:0 0;transform:scaleX(0.9531);">PLAYERS</span>
<span style="position:absolute;white-space:nowrap;font-family:'Liberation Sans', sans-serif;font-size:23px;line-height:25.691px;color:#333a40;font-weight:700;left:221.0px;top:1144.18px;transform-origin:0 0;transform:scaleX(0.9231);">#</span>
<span style="position:absolute;white-space:nowrap;font-family:'Liberation Sans', sans-serif;font-size:23px;line-height:25.691px;color:#333a40;font-weight:700;left:266.62px;top:1144.18px;transform-origin:0 0;transform:scaleX(0.8810);">Player</span>
<span style="position:absolute;white-space:nowrap;font-family:'Liberation Sans', sans-serif;font-size:23px;line-height:25.691px;color:#333a40;font-weight:700;right:2231.2px;top:1144.18px;transform-origin:100% 0;transform:scaleX(0.8665);">QS</span>
<span style="position:absolute;white-space:nowrap;font-family:'Liberation Sans', sans-serif;font-size:23px;line-height:25.691px;color:#333a40;font-weight:700;right:2142.86px;top:1144.18px;transform-origin:100% 0;transform:scaleX(0.8705);">K%</span>
<span style="position:absolute;white-space:nowrap;font-family:'Liberation Sans', sans-serif;font-size:23px;line-height:25.691px;color:#333a40;font-weight:700;right:2054.32px;top:1144.18px;transform-origin:100% 0;transform:scaleX(0.8426);">BB%</span>
<span style="position:absolute;white-space:nowrap;font-family:'Liberation Sans', sans-serif;font-size:23px;line-height:25.691px;color:#333a40;font-weight:700;right:1964.6px;top:1144.18px;transform-origin:100% 0;transform:scaleX(0.8791);">FPStk%</span>
<span style="position:absolute;white-space:nowrap;font-family:'Liberation Sans', sans-serif;font-size:23px;line-height:25.691px;color:#333a40;font-weight:700;right:1821.4px;top:1144.18px;transform-origin:100% 0;transform:scaleX(0.8953);">InZone%</span>
<span style="position:absolute;white-space:nowrap;font-family:'Liberation Sans', sans-serif;font-size:23px;line-height:25.691px;color:#333a40;font-weight:700;right:1733.11px;top:1144.18px;transform-origin:100% 0;transform:scaleX(0.8698);">Miss%</span>
<span style="position:absolute;white-space:nowrap;font-family:'Liberation Sans', sans-serif;font-size:23px;line-height:25.691px;color:#333a40;font-weight:700;right:1642.22px;top:1144.18px;transform-origin:100% 0;transform:scaleX(0.8502);">Chase%</span>
<svg style="position:absolute;left:924px;top:1153px;" width="17" height="9" viewBox="0 0 17 9"><polygon points="0,0 17,0 8.5,9" fill="#8a8a8a"/></svg>
<div style="position:absolute;left:138px;top:1186.5px;width:1103px;height:2px;background:#c8d5e4;"></div>
<svg style="position:absolute;left:161.4px;top:1145.6px;" width="18" height="25" viewBox="0 0 18 25"><path transform="scale(0.728)" d="M3.7 0.3 H20.3 Q22 0.3 22 1.9 Q22 3.5 20.3 3.5 H18.2 V10 Q18.2 15 23.4 16.7 V19.9 H13.5 V31 L11.7 32.8 L9.9 31 V19.9 H0.1 V16.7 Q5.3 15 5.3 10 V3.5 H3.7 Q2 3.5 2 1.9 Q2 0.3 3.7 0.3 Z" fill="#5b8ac6"/></svg>
<div style="position:absolute;left:138px;top:1188.0px;width:1103px;height:58.7px;background:#f8f8f8;"></div>
<div style="position:absolute;left:829px;top:1188.0px;width:133px;height:58.7px;background:#e6f0f9;"></div>
<div style="position:absolute;left:138px;top:1245.7px;width:1103px;height:1.5px;background:#e3e3e3;"></div>
<div style="position:absolute;left:829px;top:1246.7px;width:133px;height:58.7px;background:#e6f0f9;"></div>
<div style="position:absolute;left:138px;top:1304.4px;width:1103px;height:1.5px;background:#e3e3e3;"></div>
<div style="position:absolute;left:138px;top:1305.4px;width:1103px;height:58.7px;background:#f8f8f8;"></div>
<div style="position:absolute;left:829px;top:1305.4px;width:133px;height:58.7px;background:#e6f0f9;"></div>
<div style="position:absolute;left:138px;top:1363.1000000000001px;width:1103px;height:1.5px;background:#e3e3e3;"></div>
<div style="position:absolute;left:829px;top:1364.1px;width:133px;height:58.7px;background:#e6f0f9;"></div>
<div style="position:absolute;left:138px;top:1421.8px;width:1103px;height:1.5px;background:#e3e3e3;"></div>
<div style="position:absolute;left:138px;top:1422.8px;width:1103px;height:58.7px;background:#f8f8f8;"></div>
<div style="position:absolute;left:829px;top:1422.8px;width:133px;height:58.7px;background:#e6f0f9;"></div>
<div style="position:absolute;left:138px;top:1480.5px;width:1103px;height:1.5px;background:#e3e3e3;"></div>
<div style="position:absolute;left:829px;top:1481.5px;width:133px;height:58.7px;background:#e6f0f9;"></div>
<div style="position:absolute;left:138px;top:1539.2px;width:1103px;height:1.5px;background:#e3e3e3;"></div>
<svg style="position:absolute;left:153px;top:1200.5px;" width="24" height="33" viewBox="0 0 24 33"><path d="M3.7 0.3 H20.3 Q22 0.3 22 1.9 Q22 3.5 20.3 3.5 H18.2 V10 Q18.2 15 23.4 16.7 V19.9 H13.5 V31 L11.7 32.8 L9.9 31 V19.9 H0.1 V16.7 Q5.3 15 5.3 10 V3.5 H3.7 Q2 3.5 2 1.9 Q2 0.3 3.7 0.3 Z" fill="#000"/></svg>
<span style="position:absolute;white-space:nowrap;font-family:'Liberation Sans', sans-serif;font-size:24.4px;line-height:27.255px;color:#333a40;font-weight:400;-webkit-text-stroke:0.3px #333a40;right:2627.76px;top:1204.52px;transform-origin:100% 0;transform:scaleX(0.9500);">1</span>
<span style="position:absolute;white-space:nowrap;font-family:'Liberation Sans', sans-serif;font-size:24.4px;line-height:27.255px;color:#3a6198;font-weight:400;-webkit-text-stroke:0.3px #3a6198;left:307.65px;top:1204.52px;transform-origin:0 0;transform:scaleX(0.9537);">C. Martin (P - BOS)</span>
<span style="position:absolute;white-space:nowrap;font-family:'Liberation Sans', sans-serif;font-size:24.4px;line-height:27.255px;color:#333a40;font-weight:400;-webkit-text-stroke:0.3px #333a40;right:2234.86px;top:1204.52px;transform-origin:100% 0;transform:scaleX(0.9500);">0</span>
<span style="position:absolute;white-space:nowrap;font-family:'Liberation Sans', sans-serif;font-size:24.4px;line-height:27.255px;color:#3a6198;font-weight:400;-webkit-text-stroke:0.3px #3a6198;right:2146.15px;top:1204.52px;transform-origin:100% 0;transform:scaleX(0.9500);">22.1%</span>
<span style="position:absolute;white-space:nowrap;font-family:'Liberation Sans', sans-serif;font-size:24.4px;line-height:27.255px;color:#3a6198;font-weight:400;-webkit-text-stroke:0.3px #3a6198;right:2057.85px;top:1204.52px;transform-origin:100% 0;transform:scaleX(0.9500);">2.7%</span>
<span style="position:absolute;white-space:nowrap;font-family:'Liberation Sans', sans-serif;font-size:24.4px;line-height:27.255px;color:#3a6198;font-weight:700;right:1926.1px;top:1204.52px;transform-origin:100% 0;transform:scaleX(0.9500);">79.3%</span>
<span style="position:absolute;white-space:nowrap;font-family:'Liberation Sans', sans-serif;font-size:24.4px;line-height:27.255px;color:#3a6198;font-weight:400;-webkit-text-stroke:0.3px #3a6198;right:1825.65px;top:1204.52px;transform-origin:100% 0;transform:scaleX(0.9500);">59.8%</span>
<span style="position:absolute;white-space:nowrap;font-family:'Liberation Sans', sans-serif;font-size:24.4px;line-height:27.255px;color:#3a6198;font-weight:400;-webkit-text-stroke:0.3px #3a6198;right:1736.65px;top:1204.52px;transform-origin:100% 0;transform:scaleX(0.9500);">22.2%</span>
<span style="position:absolute;white-space:nowrap;font-family:'Liberation Sans', sans-serif;font-size:24.4px;line-height:27.255px;color:#3a6198;font-weight:400;-webkit-text-stroke:0.3px #3a6198;right:1645.85px;top:1204.52px;transform-origin:100% 0;transform:scaleX(0.9500);">36.3%</span>
<svg style="position:absolute;left:271px;top:1199.5px;" width="28" height="37" viewBox="0 0 28 37"><text x="1" y="34.5" font-family="Liberation Serif" font-weight="700" font-size="48" textLength="25" lengthAdjust="spacingAndGlyphs" fill="#c0323a" stroke="#0c2340" stroke-width="0.9">B</text></svg>
<svg style="position:absolute;left:153px;top:1259.2px;" width="24" height="33" viewBox="0 0 24 33"><path d="M3.7 0.3 H20.3 Q22 0.3 22 1.9 Q22 3.5 20.3 3.5 H18.2 V10 Q18.2 15 23.4 16.7 V19.9 H13.5 V31 L11.7 32.8 L9.9 31 V19.9 H0.1 V16.7 Q5.3 15 5.3 10 V3.5 H3.7 Q2 3.5 2 1.9 Q2 0.3 3.7 0.3 Z" fill="#000"/></svg>
<span style="position:absolute;white-space:nowrap;font-family:'Liberation Sans', sans-serif;font-size:24.4px;line-height:27.255px;color:#333a40;font-weight:400;-webkit-text-stroke:0.3px #333a40;right:2627.76px;top:1263.22px;transform-origin:100% 0;transform:scaleX(0.9500);">2</span>
<span style="position:absolute;white-space:nowrap;font-family:'Liberation Sans', sans-serif;font-size:24.4px;line-height:27.255px;color:#3a6198;font-weight:400;-webkit-text-stroke:0.3px #3a6198;left:306.74px;top:1263.22px;transform-origin:0 0;transform:scaleX(0.9286);">R. Bleier (P - BOS)</span>
<span style="position:absolute;white-space:nowrap;font-family:'Liberation Sans', sans-serif;font-size:24.4px;line-height:27.255px;color:#333a40;font-weight:400;-webkit-text-stroke:0.3px #333a40;right:2234.86px;top:1263.22px;transform-origin:100% 0;transform:scaleX(0.9500);">0</span>
<span style="position:absolute;white-space:nowrap;font-family:'Liberation Sans', sans-serif;font-size:24.4px;line-height:27.255px;color:#3a6198;font-weight:400;-webkit-text-stroke:0.3px #3a6198;right:2146.15px;top:1263.22px;transform-origin:100% 0;transform:scaleX(0.9500);">11.8%</span>
<span style="position:absolute;white-space:nowrap;font-family:'Liberation Sans', sans-serif;font-size:24.4px;line-height:27.255px;color:#3a6198;font-weight:400;-webkit-text-stroke:0.3px #3a6198;right:2057.85px;top:1263.22px;transform-origin:100% 0;transform:scaleX(0.9500);">4.7%</span>
<span style="position:absolute;white-space:nowrap;font-family:'Liberation Sans', sans-serif;font-size:24.4px;line-height:27.255px;color:#3a6198;font-weight:700;right:1926.1px;top:1263.22px;transform-origin:100% 0;transform:scaleX(0.9500);">78.3%</span>
<span style="position:absolute;white-space:nowrap;font-family:'Liberation Sans', sans-serif;font-size:24.4px;line-height:27.255px;color:#3a6198;font-weight:400;-webkit-text-stroke:0.3px #3a6198;right:1825.65px;top:1263.22px;transform-origin:100% 0;transform:scaleX(0.9500);">49.3%</span>
<span style="position:absolute;white-space:nowrap;font-family:'Liberation Sans', sans-serif;font-size:24.4px;line-height:27.255px;color:#3a6198;font-weight:400;-webkit-text-stroke:0.3px #3a6198;right:1736.65px;top:1263.22px;transform-origin:100% 0;transform:scaleX(0.9500);">17.9%</span>
<span style="position:absolute;white-space:nowrap;font-family:'Liberation Sans', sans-serif;font-size:24.4px;line-height:27.255px;color:#3a6198;font-weight:400;-webkit-text-stroke:0.3px #3a6198;right:1645.85px;top:1263.22px;transform-origin:100% 0;transform:scaleX(0.9500);">43.4%</span>
<svg style="position:absolute;left:271px;top:1258.2px;" width="28" height="37" viewBox="0 0 28 37"><text x="1" y="34.5" font-family="Liberation Serif" font-weight="700" font-size="48" textLength="25" lengthAdjust="spacingAndGlyphs" fill="#c0323a" stroke="#0c2340" stroke-width="0.9">B</text></svg>
<svg style="position:absolute;left:153px;top:1317.9px;" width="24" height="33" viewBox="0 0 24 33"><path d="M3.7 0.3 H20.3 Q22 0.3 22 1.9 Q22 3.5 20.3 3.5 H18.2 V10 Q18.2 15 23.4 16.7 V19.9 H13.5 V31 L11.7 32.8 L9.9 31 V19.9 H0.1 V16.7 Q5.3 15 5.3 10 V3.5 H3.7 Q2 3.5 2 1.9 Q2 0.3 3.7 0.3 Z" fill="#000"/></svg>
<span style="position:absolute;white-space:nowrap;font-family:'Liberation Sans', sans-serif;font-size:24.4px;line-height:27.255px;color:#333a40;font-weight:400;-webkit-text-stroke:0.3px #333a40;right:2627.76px;top:1321.92px;transform-origin:100% 0;transform:scaleX(0.9500);">3</span>
<span style="position:absolute;white-space:nowrap;font-family:'Liberation Sans', sans-serif;font-size:24.4px;line-height:27.255px;color:#3a6198;font-weight:400;-webkit-text-stroke:0.3px #3a6198;left:308.6px;top:1321.92px;transform-origin:0 0;transform:scaleX(0.9040);">J. Jackson (P - TOR)</span>
<span style="position:absolute;white-space:nowrap;font-family:'Liberation Sans', sans-serif;font-size:24.4px;line-height:27.255px;color:#333a40;font-weight:400;-webkit-text-stroke:0.3px #333a40;right:2234.86px;top:1321.92px;transform-origin:100% 0;transform:scaleX(0.9500);">0</span>
<span style="position:absolute;white-space:nowrap;font-family:'Liberation Sans', sans-serif;font-size:24.4px;line-height:27.255px;color:#3a6198;font-weight:400;-webkit-text-stroke:0.3px #3a6198;right:2146.15px;top:1321.92px;transform-origin:100% 0;transform:scaleX(0.9500);">20.3%</span>
<span style="position:absolute;white-space:nowrap;font-family:'Liberation Sans', sans-serif;font-size:24.4px;line-height:27.255px;color:#3a6198;font-weight:400;-webkit-text-stroke:0.3px #3a6198;right:2057.85px;top:1321.92px;transform-origin:100% 0;transform:scaleX(0.9500);">4.1%</span>
<span style="position:absolute;white-space:nowrap;font-family:'Liberation Sans', sans-serif;font-size:24.4px;line-height:27.255px;color:#3a6198;font-weight:700;right:1926.1px;top:1321.92px;transform-origin:100% 0;transform:scaleX(0.9500);">78.1%</span>
<span style="position:absolute;white-space:nowrap;font-family:'Liberation Sans', sans-serif;font-size:24.4px;line-height:27.255px;color:#3a6198;font-weight:400;-webkit-text-stroke:0.3px #3a6198;right:1825.65px;top:1321.92px;transform-origin:100% 0;transform:scaleX(0.9500);">50.4%</span>
<span style="position:absolute;white-space:nowrap;font-family:'Liberation Sans', sans-serif;font-size:24.4px;line-height:27.255px;color:#3a6198;font-weight:400;-webkit-text-stroke:0.3px #3a6198;right:1736.65px;top:1321.92px;transform-origin:100% 0;transform:scaleX(0.9500);">30.9%</span>
<span style="position:absolute;white-space:nowrap;font-family:'Liberation Sans', sans-serif;font-size:24.4px;line-height:27.255px;color:#3a6198;font-weight:400;-webkit-text-stroke:0.3px #3a6198;right:1645.85px;top:1321.92px;transform-origin:100% 0;transform:scaleX(0.9500);">31.1%</span>
<svg style="position:absolute;left:267px;top:1321.4px;" width="36" height="28" viewBox="0 0 36 28"><path d="M1 11 Q9 7 15 6 Q21 2 30 1.5 Q25 4 23 7 Q28 8.5 28 13 Q23 11.5 20 13.5 L14 26 Q15 17 12 14 Q7 13 1 11Z" fill="#134a8e"/><path d="M5 11 Q11 9.5 15 10" stroke="#fff" stroke-width="1" fill="none"/><path d="M26 8 L29 5 L30.5 8.5 L34 8 L32 11.5 L34.5 13 L30 14.5 L29.5 17 L27 14.5 Z" fill="#e8291c"/></svg>
<svg style="position:absolute;left:153px;top:1376.6px;" width="24" height="33" viewBox="0 0 24 33"><path d="M3.7 0.3 H20.3 Q22 0.3 22 1.9 Q22 3.5 20.3 3.5 H18.2 V10 Q18.2 15 23.4 16.7 V19.9 H13.5 V31 L11.7 32.8 L9.9 31 V19.9 H0.1 V16.7 Q5.3 15 5.3 10 V3.5 H3.7 Q2 3.5 2 1.9 Q2 0.3 3.7 0.3 Z" fill="#000"/></svg>
<span style="position:absolute;white-space:nowrap;font-family:'Liberation Sans', sans-serif;font-size:24.4px;line-height:27.255px;color:#333a40;font-weight:400;-webkit-text-stroke:0.3px #333a40;right:2627.76px;top:1380.62px;transform-origin:100% 0;transform:scaleX(0.9500);">4</span>
<span style="position:absolute;white-space:nowrap;font-family:'Liberation Sans', sans-serif;font-size:24.4px;line-height:27.255px;color:#3a6198;font-weight:400;-webkit-text-stroke:0.3px #3a6198;left:307.7px;top:1380.62px;transform-origin:0 0;transform:scaleX(0.9038);">G. Speier (P - SEA)</span>
<span style="position:absolute;white-space:nowrap;font-family:'Liberation Sans', sans-serif;font-size:24.4px;line-height:27.255px;color:#333a40;font-weight:400;-webkit-text-stroke:0.3px #333a40;right:2234.86px;top:1380.62px;transform-origin:100% 0;transform:scaleX(0.9500);">0</span>
<span style="position:absolute;white-space:nowrap;font-family:'Liberation Sans', sans-serif;font-size:24.4px;line-height:27.255px;color:#3a6198;font-weight:400;-webkit-text-stroke:0.3px #3a6198;right:2146.15px;top:1380.62px;transform-origin:100% 0;transform:scaleX(0.9500);">27.0%</span>
<span style="position:absolute;white-space:nowrap;font-family:'Liberation Sans', sans-serif;font-size:24.4px;line-height:27.255px;color:#3a6198;font-weight:400;-webkit-text-stroke:0.3px #3a6198;right:2057.85px;top:1380.62px;transform-origin:100% 0;transform:scaleX(0.9500);">8.1%</span>
<span style="position:absolute;white-space:nowrap;font-family:'Liberation Sans', sans-serif;font-size:24.4px;line-height:27.255px;color:#3a6198;font-weight:700;right:1926.1px;top:1380.62px;transform-origin:100% 0;transform:scaleX(0.9500);">77.3%</span>
<span style="position:absolute;white-space:nowrap;font-family:'Liberation Sans', sans-serif;font-size:24.4px;line-height:27.255px;color:#3a6198;font-weight:400;-webkit-text-stroke:0.3px #3a6198;right:1825.65px;top:1380.62px;transform-origin:100% 0;transform:scaleX(0.9500);">46.6%</span>
<span style="position:absolute;white-space:nowrap;font-family:'Liberation Sans', sans-serif;font-size:24.4px;line-height:27.255px;color:#3a6198;font-weight:400;-webkit-text-stroke:0.3px #3a6198;right:1736.65px;top:1380.62px;transform-origin:100% 0;transform:scaleX(0.9500);">29.0%</span>
<span style="position:absolute;white-space:nowrap;font-family:'Liberation Sans', sans-serif;font-size:24.4px;line-height:27.255px;color:#3a6198;font-weight:400;-webkit-text-stroke:0.3px #3a6198;right:1645.85px;top:1380.62px;transform-origin:100% 0;transform:scaleX(0.9500);">35.3%</span>
<svg style="position:absolute;left:273px;top:1374.6px;" width="26" height="39" viewBox="0 0 26 39"><text x="1" y="35.5" font-family="Liberation Serif" font-weight="700" font-size="50" textLength="23" lengthAdjust="spacingAndGlyphs" fill="#c4ced4" stroke="#005c5c" stroke-width="1.8">S</text><circle cx="12.5" cy="19" r="3" fill="#005c5c"/></svg>
<svg style="position:absolute;left:153px;top:1435.3px;" width="24" height="33" viewBox="0 0 24 33"><path d="M3.7 0.3 H20.3 Q22 0.3 22 1.9 Q22 3.5 20.3 3.5 H18.2 V10 Q18.2 15 23.4 16.7 V19.9 H13.5 V31 L11.7 32.8 L9.9 31 V19.9 H0.1 V16.7 Q5.3 15 5.3 10 V3.5 H3.7 Q2 3.5 2 1.9 Q2 0.3 3.7 0.3 Z" fill="#000"/></svg>
<span style="position:absolute;white-space:nowrap;font-family:'Liberation Sans', sans-serif;font-size:24.4px;line-height:27.255px;color:#333a40;font-weight:400;-webkit-text-stroke:0.3px #333a40;right:2627.76px;top:1439.32px;transform-origin:100% 0;transform:scaleX(0.9500);">5</span>
<span style="position:absolute;white-space:nowrap;font-family:'Liberation Sans', sans-serif;font-size:24.4px;line-height:27.255px;color:#3a6198;font-weight:400;-webkit-text-stroke:0.3px #3a6198;left:306.73px;top:1439.32px;transform-origin:0 0;transform:scaleX(0.9364);">M. Scherzer (P - TEX)</span>
<span style="position:absolute;white-space:nowrap;font-family:'Liberation Sans', sans-serif;font-size:24.4px;line-height:27.255px;color:#333a40;font-weight:400;-webkit-text-stroke:0.3px #333a40;right:2234.86px;top:1439.32px;transform-origin:100% 0;transform:scaleX(0.9500);">14</span>
<span style="position:absolute;white-space:nowrap;font-family:'Liberation Sans', sans-serif;font-size:24.4px;line-height:27.255px;color:#3a6198;font-weight:400;-webkit-text-stroke:0.3px #3a6198;right:2146.15px;top:1439.32px;transform-origin:100% 0;transform:scaleX(0.9500);">30.3%</span>
<span style="position:absolute;white-space:nowrap;font-family:'Liberation Sans', sans-serif;font-size:24.4px;line-height:27.255px;color:#3a6198;font-weight:400;-webkit-text-stroke:0.3px #3a6198;right:2057.85px;top:1439.32px;transform-origin:100% 0;transform:scaleX(0.9500);">3.7%</span>
<span style="position:absolute;white-space:nowrap;font-family:'Liberation Sans', sans-serif;font-size:24.4px;line-height:27.255px;color:#3a6198;font-weight:700;right:1926.1px;top:1439.32px;transform-origin:100% 0;transform:scaleX(0.9500);">76.8%</span>
<span style="position:absolute;white-space:nowrap;font-family:'Liberation Sans', sans-serif;font-size:24.4px;line-height:27.255px;color:#3a6198;font-weight:400;-webkit-text-stroke:0.3px #3a6198;right:1825.65px;top:1439.32px;transform-origin:100% 0;transform:scaleX(0.9500);">51.6%</span>
<span style="position:absolute;white-space:nowrap;font-family:'Liberation Sans', sans-serif;font-size:24.4px;line-height:27.255px;color:#3a6198;font-weight:400;-webkit-text-stroke:0.3px #3a6198;right:1736.65px;top:1439.32px;transform-origin:100% 0;transform:scaleX(0.9500);">30.9%</span>
<span style="position:absolute;white-space:nowrap;font-family:'Liberation Sans', sans-serif;font-size:24.4px;line-height:27.255px;color:#3a6198;font-weight:400;-webkit-text-stroke:0.3px #3a6198;right:1645.85px;top:1439.32px;transform-origin:100% 0;transform:scaleX(0.9500);">32.0%</span>
<svg style="position:absolute;left:268px;top:1433.3px;" width="34" height="38" viewBox="0 0 34 38"><text x="2" y="36.5" font-family="Liberation Serif" font-weight="700" font-size="50" textLength="30" lengthAdjust="spacingAndGlyphs" fill="#003278">T</text><text x="0.5" y="35" font-family="Liberation Serif" font-weight="700" font-size="50" textLength="30" lengthAdjust="spacingAndGlyphs" fill="#c0111f" stroke="#fff" stroke-width="0.6">T</text></svg>
<svg style="position:absolute;left:153px;top:1494.0px;" width="24" height="33" viewBox="0 0 24 33"><path d="M3.7 0.3 H20.3 Q22 0.3 22 1.9 Q22 3.5 20.3 3.5 H18.2 V10 Q18.2 15 23.4 16.7 V19.9 H13.5 V31 L11.7 32.8 L9.9 31 V19.9 H0.1 V16.7 Q5.3 15 5.3 10 V3.5 H3.7 Q2 3.5 2 1.9 Q2 0.3 3.7 0.3 Z" fill="#000"/></svg>
<svg style="position:absolute;left:272px;top:1491.5px;" width="26" height="6" viewBox="0 0 26 6"><ellipse cx="13" cy="6" rx="8" ry="4" fill="#df4601"/></svg>
<span style="position:absolute;white-space:nowrap;font-family:'Liberation Sans', sans-serif;font-size:24px;line-height:26.808px;color:#3a6198;font-weight:400;-webkit-text-stroke:0.3px #3a6198;left:149.06px;top:816.28px;transform-origin:0 0;transform:scaleX(0.9423);">Results 1 - 500 of 507</span>
<div style="position:absolute;left:1901px;top:690px;width:898px;height:719px;background:#fff;border:1.5px solid #e2e2e2;border-radius:14px;box-sizing:border-box;box-shadow:0 3px 8px rgba(0,0,0,0.22);"></div>
<span style="position:absolute;white-space:nowrap;font-family:'Liberation Sans', sans-serif;font-size:25.5px;line-height:28.483px;color:#3a6198;font-weight:400;-webkit-text-stroke:0.3px #3a6198;left:2270.72px;top:711.42px;transform-origin:0 0;transform:scaleX(1.0325);">Qualifications</span>
<div style="position:absolute;left:1904px;top:755.5px;width:892px;height:1.5px;background:#eeeeee;"></div>
<div style="position:absolute;left:1912px;top:836px;width:876px;height:1.2px;background:#e0e0e0;"></div>
<div style="position:absolute;left:2054.5px;top:764px;width:142.25px;height:74px;background:#fff;border:1.5px solid #dddddd;border-bottom:none;border-radius:9px 9px 0 0;box-sizing:border-box;"></div>
<span style="position:absolute;white-space:nowrap;font-family:'Liberation Sans', sans-serif;font-size:25.5px;line-height:28.483px;color:#3a6198;font-weight:400;-webkit-text-stroke:0.3px #3a6198;left:1938.8px;top:787.67px;transform-origin:0 0;transform:scaleX(0.9767);">Presets</span>
<span style="position:absolute;white-space:nowrap;font-family:'Liberation Sans', sans-serif;font-size:25.5px;line-height:28.483px;color:#555;font-weight:400;-webkit-text-stroke:0.3px #555;left:2082.26px;top:787.67px;transform-origin:0 0;transform:scaleX(0.9899);">Custom</span>
<span style="position:absolute;white-space:nowrap;font-family:'Liberation Sans', sans-serif;font-size:26px;line-height:29.042px;color:#111;font-weight:400;-webkit-text-stroke:0.3px #111;left:1929.31px;top:857.47px;transform-origin:0 0;transform:scaleX(0.9894);">Current Qualifications:</span>
<svg style="position:absolute;left:2752px;top:854px;" width="34" height="34" viewBox="0 0 34 34"><circle cx="17" cy="17" r="17" fill="#365a8a"/><rect x="15" y="14" width="4.2" height="12" rx="1" fill="#fff"/><circle cx="17.1" cy="9.5" r="2.5" fill="#fff"/></svg>
<div style="position:absolute;left:1933.4px;top:913px;width:266.7999999999997px;height:59px;background:#fff;border:1.5px solid #dcdcdc;box-sizing:border-box;"></div>
<div style="position:absolute;left:2153px;top:913px;width:1.5px;height:59px;background:#dcdcdc;"></div>
<span style="position:absolute;white-space:nowrap;font-family:'Liberation Sans', sans-serif;font-size:25.5px;line-height:28.483px;color:#111;font-weight:400;-webkit-text-stroke:0.3px #111;left:1940.01px;top:929.52px;transform-origin:0 0;transform:scaleX(0.9460);">P|PIT - Pitches (...</span>
<svg style="position:absolute;left:2164px;top:936px;" width="21.5" height="13" viewBox="0 0 21.5 13"><path d="M1.5 1.5 L10.75 11 L20.0 1.5" fill="none" stroke="#777" stroke-width="3.2"/></svg>
<div style="position:absolute;left:2216.4px;top:913px;width:196.0999999999999px;height:59px;background:#fff;border:1.5px solid #dcdcdc;box-sizing:border-box;"></div>
<div style="position:absolute;left:2364px;top:913px;width:1.5px;height:59px;background:#dcdcdc;"></div>
<span style="position:absolute;white-space:nowrap;font-family:'Liberation Sans', sans-serif;font-size:25.5px;line-height:28.483px;color:#111;font-weight:400;-webkit-text-stroke:0.3px #111;left:2224.34px;top:929.52px;transform-origin:0 0;transform:scaleX(0.9573);">&gt;=</span>
<svg style="position:absolute;left:2376px;top:936px;" width="21.5" height="13" viewBox="0 0 21.5 13"><path d="M1.5 1.5 L10.75 11 L20.0 1.5" fill="none" stroke="#777" stroke-width="3.2"/></svg>
<div style="position:absolute;left:2428.3px;top:913px;width:193.4px;height:59px;background:#fff;border:1.5px solid #dcdcdc;box-sizing:border-box;"></div>
<span style="position:absolute;white-space:nowrap;font-family:'Liberation Sans', sans-serif;font-size:25.5px;line-height:28.483px;color:#555;font-weight:400;-webkit-text-stroke:0.3px #555;left:2442.77px;top:929.52px;transform-origin:0 0;transform:scaleX(1.0275);">250</span>
<svg style="position:absolute;left:2655px;top:930px;" width="30" height="30" viewBox="0 0 30 30"><path d="M22.43 6.25 A11.3 11.3 0 1 0 25.16 17.21" fill="none" stroke="#bdbdbd" stroke-width="2.8"/><polygon points="16.2,12.4 27.7,1 27.7,12.4" fill="#bdbdbd"/></svg>
<svg style="position:absolute;left:2722px;top:927px;" width="36" height="35" viewBox="0 0 36 35"><circle cx="18" cy="17.1" r="14.8" fill="none" stroke="#000" stroke-width="3"/><rect x="9.8" y="15.6" width="16.4" height="3" fill="#000"/></svg>
<svg style="position:absolute;left:2400px;top:820px;" width="108" height="108" viewBox="0 0 108 108"><defs><filter id="ksh" x="-30%" y="-30%" width="160%" height="160%"><feDropShadow dx="0" dy="1.2" stdDeviation="1.2" flood-opacity="0.35"/></filter></defs>
<circle cx="49.9" cy="50.2" r="33.3" fill="#e8e8e8"/>
<rect x="10" y="39" width="48" height="24.8" rx="12.4" fill="#8a9db8"/>
<circle cx="50.1" cy="50.7" r="17.7" fill="#365a8a" filter="url(#ksh)"/></svg>
<span style="position:absolute;white-space:nowrap;font-family:'Liberation Sans', sans-serif;font-size:26px;line-height:29.042px;color:#111;font-weight:400;-webkit-text-stroke:0.3px #111;left:2485.2px;top:857.47px;transform-origin:0 0;transform:scaleX(0.9788);">With event level filters</span>
<svg style="position:absolute;left:2400px;top:820px;" width="108" height="108" viewBox="0 0 108 108"><path fill-rule="evenodd" d="M11.5 54.6 A42 42 0 1 0 95.5 54.6 A42 42 0 1 0 11.5 54.6 Z M16.6 50.2 A33.3 33.3 0 1 0 83.2 50.2 A33.3 33.3 0 1 0 16.6 50.2 Z" fill="rgba(120,232,90,0.33)"/><circle cx="53.5" cy="54.6" r="46" fill="none" stroke="rgba(108,246,66,0.93)" stroke-width="8.6"/></svg>
<div style="position:absolute;left:1912px;top:1155.8px;width:876px;height:1.6px;background:#9a9a9a;"></div>
<span style="position:absolute;white-space:nowrap;font-family:'Liberation Sans', sans-serif;font-size:26px;line-height:29.042px;color:#111;font-weight:400;-webkit-text-stroke:0.3px #111;left:1930.3px;top:1189.97px;transform-origin:0 0;transform:scaleX(0.9451);">Add Qualification (rate stats on 0 to 1 scale):</span>
<div style="position:absolute;left:1933.4px;top:1240.5px;width:266.7999999999997px;height:58.0px;background:#fff;border:1.5px solid #dcdcdc;box-sizing:border-box;"></div>
<div style="position:absolute;left:2153px;top:1240.5px;width:1.5px;height:58.0px;background:#dcdcdc;"></div>
<span style="position:absolute;white-space:nowrap;font-family:'Liberation Sans', sans-serif;font-size:22px;line-height:24.574px;color:#333;font-weight:400;-webkit-text-stroke:0.3px #333;left:1947.91px;top:1258.49px;transform-origin:0 0;transform:scaleX(0.8891);">Select Stat</span>
<svg style="position:absolute;left:2164px;top:1263px;" width="21.5" height="13" viewBox="0 0 21.5 13"><path d="M1.5 1.5 L10.75 11 L20.0 1.5" fill="none" stroke="#777" stroke-width="3.2"/></svg>
<div style="position:absolute;left:2216.4px;top:1240.5px;width:196.0999999999999px;height:58.0px;background:#fff;border:1.5px solid #dcdcdc;box-sizing:border-box;"></div>
<div style="position:absolute;left:2364px;top:1240.5px;width:1.5px;height:58.0px;background:#dcdcdc;"></div>
<span style="position:absolute;white-space:nowrap;font-family:'Liberation Sans', sans-serif;font-size:25.5px;line-height:28.483px;color:#111;font-weight:400;-webkit-text-stroke:0.3px #111;left:2224.34px;top:1255.32px;transform-origin:0 0;transform:scaleX(0.9573);">&gt;=</span>
<svg style="position:absolute;left:2376px;top:1263px;" width="21.5" height="13" viewBox="0 0 21.5 13"><path d="M1.5 1.5 L10.75 11 L20.0 1.5" fill="none" stroke="#777" stroke-width="3.2"/></svg>
<div style="position:absolute;left:2428.3px;top:1240.5px;width:193.4px;height:58px;background:#fff;border:1.5px solid #dcdcdc;box-sizing:border-box;"></div>
<span style="position:absolute;white-space:nowrap;font-family:'Liberation Sans', sans-serif;font-size:25.5px;line-height:28.483px;color:#8a8a8a;font-weight:400;-webkit-text-stroke:0.3px #8a8a8a;left:2441.79px;top:1255.32px;transform-origin:0 0;transform:scaleX(1.0056);">Number</span>
<svg style="position:absolute;left:2722px;top:1254.5px;" width="36" height="35" viewBox="0 0 36 35"><circle cx="18" cy="17.1" r="14.8" fill="none" stroke="#bdbdbd" stroke-width="3"/><rect x="9.8" y="15.6" width="16.4" height="3" fill="#bdbdbd"/><rect x="16.5" y="8.9" width="3" height="16.4" fill="#bdbdbd"/></svg>
<span style="position:absolute;white-space:nowrap;font-family:'Liberation Sans', sans-serif;font-size:26px;line-height:29.042px;color:#111;font-weight:400;-webkit-text-stroke:0.3px #111;left:1929.38px;top:1350.77px;transform-origin:0 0;transform:scaleX(0.9246);">Search For:</span>
<div style="position:absolute;left:2169px;top:1352.5px;width:60px;height:24.5px;background:#8fa6c4;border-radius:12px;"></div>
<div style="position:absolute;left:2197px;top:1345.5px;width:36px;height:36px;background:#365a8a;border-radius:50%;box-shadow:0 1px 3px rgba(0,0,0,0.3);"></div>
<span style="position:absolute;white-space:nowrap;font-family:'Liberation Sans', sans-serif;font-size:26px;line-height:29.042px;color:#111;font-weight:400;-webkit-text-stroke:0.3px #111;left:2251.05px;top:1350.77px;transform-origin:0 0;transform:scaleX(0.9465);">common stats only</span>
<div style="position:absolute;left:2476px;top:1352.5px;width:59px;height:24.5px;background:#9e9e9e;border-radius:12px;"></div>
<div style="position:absolute;left:2467.8px;top:1345.5px;width:36px;height:36px;background:#fafafa;border-radius:50%;box-shadow:0 1px 3px rgba(0,0,0,0.35);"></div>
<span style="position:absolute;white-space:nowrap;font-family:'Liberation Sans', sans-serif;font-size:26px;line-height:29.042px;color:#111;font-weight:400;-webkit-text-stroke:0.3px #111;left:2555.74px;top:1350.77px;transform-origin:0 0;transform:scaleX(0.9627);">pitching stats only</span>
<div style="position:absolute;left:850px;top:1400px;width:1120px;height:96px;background:radial-gradient(ellipse 560px 75px at 560px 118px, rgba(0,0,0,0.11), rgba(0,0,0,0) 100%);pointer-events:none;"></div>
</body></html>
